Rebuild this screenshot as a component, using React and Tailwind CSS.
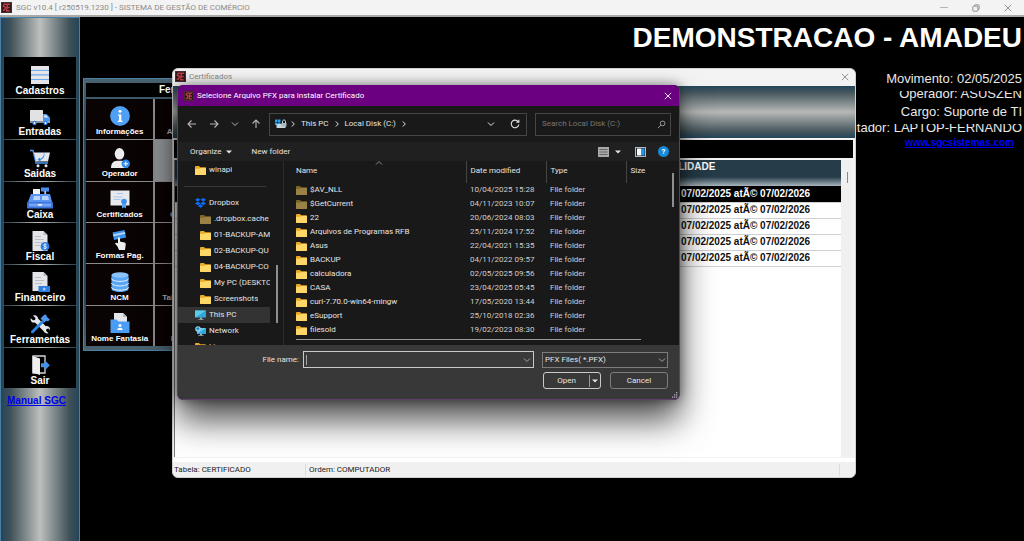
import React from "react";

const UI = "font-[Roboto,'Noto_Sans',sans-serif]";

/* ---------- icons ---------- */

function AppLogo({ className = "size-3" }) {
  return (
    <svg viewBox="0 0 12 12" className={className} aria-hidden="true">
      <rect width="12" height="12" fill="#4a3034" />
      <rect x="1" y="1" width="10" height="10" fill="#2a181b" />
      <path d="M6 2.500H3.500L2.500 4.500 5 6 3.500 9H2M10 2.500H7L6.200 9.500H9.500M6.700 6H9.500" stroke="#c23c46" strokeWidth="1.500" fill="none" />
    </svg>
  );
}

function Svg({ children }) {
  return (
    <svg viewBox="0 0 20 20" className="size-5 shrink-0" aria-hidden="true">
      {children}
    </svg>
  );
}

const icons = {
  cadastros: (
    <Svg>
      <rect x="1" y="1" width="18" height="18" fill="#9cc4f2" />
      <rect x="1" y="1" width="18" height="4" rx="0.6" fill="#e6e6ea" />
      <rect x="1" y="5.8" width="18" height="3.6" fill="#e6e6ea" />
      <rect x="1" y="10.4" width="18" height="3.6" fill="#e6e6ea" />
      <rect x="1" y="15" width="18" height="4" fill="#e6e6ea" />
      <path d="M1 5.4h18M1 9.9h18M1 14.5h18" stroke="#5d9fe8" strokeWidth="0.8" />
    </Svg>
  ),
  entradas: (
    <Svg>
      <rect x="0" y="4" width="13" height="11.5" rx="0.6" fill="#e2e2e6" />
      <path d="M13 8h3.5L20 11.5v5h-7z" fill="#4a98f0" />
      <path d="M14.2 9.2h2l2.2 2.4h-4.2z" fill="#d9ebff" />
      <path d="M0 15.5h20v1.3H0z" fill="#a9b7c9" />
      <circle cx="4.5" cy="17" r="2.2" fill="#2f7fdc" />
      <circle cx="4.5" cy="17" r="0.9" fill="#fff" />
      <circle cx="15.5" cy="17" r="2.2" fill="#2f7fdc" />
      <circle cx="15.5" cy="17" r="0.9" fill="#fff" />
    </Svg>
  ),
  saidas: (
    <Svg>
      <path d="M0 2.5h3L6 15h12" stroke="#4a98f0" strokeWidth="1.3" fill="none" />
      <path d="M3.8 4.5H20L18 13.5H6z" fill="#e4e8ee" />
      <path d="M12 2.500c3 2.500 2.500 6.500-2 8.500l-.300-1.600-2.200 2.600 3.300 1.200-.4-1.300C15.500 10 15.500 4.500 12 2.500z" fill="#2f7fdc" />
      <circle cx="8" cy="17.8" r="1.5" fill="#e4e8ee" />
      <circle cx="16" cy="17.8" r="1.5" fill="#e4e8ee" />
    </Svg>
  ),
  caixa: (
    <svg viewBox="0 0 26 22" className="h-[22px] w-[26px] shrink-0" aria-hidden="true">
      <rect x="14" y="0.5" width="8" height="4" fill="#4a8cf0" />
      <rect x="17.3" y="4" width="1.8" height="4" fill="#a8c8f8" />
      <path d="M6 2h7v7H6z" fill="#f0f2f6" />
      <path d="M4 7h19l2 8H1z" fill="#5b95f2" />
      <path d="M7 9h6v4H6zM15 9h6l1 4h-7z" fill="#b9d3fb" />
      <rect x="0" y="15" width="26" height="6.5" rx="0.8" fill="#3c74dc" />
      <rect x="2" y="16.5" width="22" height="3" fill="#74a5f5" />
      <rect x="11" y="17.2" width="4" height="1.4" fill="#fff" />
    </svg>
  ),
  fiscal: (
    <Svg>
      <path d="M2.5 0h11l4 4v16h-15z" fill="#e4e5e8" />
      <path d="M13.5 0v4h4z" fill="#b3bac4" />
      <path d="M5 5.5h6M5 8.500h9M5 11.500h7M5 14.500h5" stroke="#b9bec7" strokeWidth="1" />
      <circle cx="15" cy="15.400" r="4.400" fill="#2c7fe0" />
      <path d="M16.600 13.800c-1-1-3.200-.6-3 .6.2 1.400 3 .7 3 2.100-.1 1.200-2.200 1.400-3.300.4M15 12.500v5.800" stroke="#fff" strokeWidth="0.800" fill="none" />
    </Svg>
  ),
  financeiro: (
    <Svg>
      <path d="M2.500 0h11l4 4v15h-15z" fill="#e4e5e8" />
      <path d="M13.500 0v4h4z" fill="#b3bac4" />
      <path d="M5 5.500h6M5 8.500h9M5 11.500h7" stroke="#b9bec7" strokeWidth="1" />
      <rect x="8.500" y="14" width="11.500" height="6" fill="#2c7fe0" />
      <circle cx="14.200" cy="17" r="1.500" fill="#9cc8ff" />
    </Svg>
  ),
  ferramentas: (
    <Svg>
      <path d="M3 1.500 5.500 4 5 6 3 6.300.700 4.200C0 6.500 2 9.300 5 8.600L13.500 17c1 2 3 2.800 5 2.200L16 16.800l.500-1.800 2-.5 1.500 1.500c.4-2.400-1.600-4.300-4.200-3.800L8 4.500C8 2 5.500.500 3 1.500z" fill="#e6e8ec" />
      <path d="M1.200 17 12 6.200l2 2L3.300 19c-1.600.9-3-.5-2.100-2z" fill="#2f84e6" />
      <path d="M10.500 4.500 14 1l2-.5 1 2.500 2.800 2.600-1.800 2-1.700-.8-2 1.800z" fill="#4a98f0" />
    </Svg>
  ),
  sair: (
    <Svg>
      <path d="M3 1h12v17H3z" fill="none" stroke="#d4d6da" strokeWidth="1.300" />
      <path d="M2.500 1 10 3.500V20l-7.500-2.500z" fill="#eceef0" />
      <path d="M11 8.300h4V5.300l4.800 5-4.800 5v-3h-4z" fill="#3f92ee" />
    </Svg>
  ),
  info: (
    <Svg>
      <circle cx="10" cy="10" r="9.900" fill="#4f9ff5" />
      <circle cx="10" cy="5.300" r="1.500" fill="#fff" />
      <path d="M8 8.500h3.300v6.300h1.200V16H7.700v-1.200H9V9.800H8z" fill="#fff" />
    </Svg>
  ),
  operador: (
    <Svg>
      <ellipse cx="9.500" cy="5.800" rx="4.800" ry="5.800" fill="#ececee" />
      <path d="M1 20c0-5 2.500-7 6-7.300h5c3.500.3 5.500 2 5.500 7.300z" fill="#ececee" />
      <circle cx="15.800" cy="15.800" r="4.200" fill="#2f86ea" />
      <path d="M15.800 13.500v4.600M13.500 15.800h4.600" stroke="#fff" strokeWidth="1" />
    </Svg>
  ),
  certificados: (
    <Svg>
      <rect x="0.500" y="1.500" width="19" height="15" fill="#e8e9ec" />
      <path d="M7 4.500h6M3.500 8h9M3.500 10.500h7" stroke="#a9c7ea" strokeWidth="1" />
      <path d="M12 13v6.500l2-1.300 2 1.300V13z" fill="#5aa5f4" />
      <circle cx="14" cy="12.500" r="2.800" fill="#3d90ec" />
    </Svg>
  ),
  formas: (
    <Svg>
      <path d="M2.500 2.500 14.500 0l1.600 7.500L4 10z" fill="#3f92ee" />
      <path d="m3 4.600 12-2.500.4 1.700-12 2.500z" fill="#b6d8fb" />
      <path d="M8 7.500c1-.8 2 0 2 1v3l4.500 1c1 .3 1.300 1 1.200 2L15 20H9l-1.500-3.500L5 13.500c.5-1 1.500-1 3-.2z" fill="#eeeff1" />
    </Svg>
  ),
  ncm: (
    <Svg>
      <path d="M1.500 3v14c0 1.600 4 3 8.500 3s8.500-1.400 8.500-3V3z" fill="#5aa5f4" />
      <ellipse cx="10" cy="3" rx="8.500" ry="2.800" fill="#8cc3fb" />
      <path d="M1.500 6.500c0 1.600 4 2.900 8.500 2.900s8.500-1.300 8.500-2.900M1.500 11c0 1.600 4 2.900 8.500 2.900s8.500-1.300 8.500-2.900M1.500 15.300c0 1.600 4 2.900 8.500 2.900s8.500-1.300 8.500-2.900" stroke="#e9f3fe" strokeWidth="1" fill="none" />
    </Svg>
  ),
  fantasia: (
    <Svg>
      <path d="M4 0h9l4 4v8H4z" fill="#e4e6e9" />
      <path d="M13 0v4h4z" fill="#b3bac4" />
      <path d="M0.500 6.500h6l2 2H19.500V20h-19z" fill="#4a9df4" />
      <circle cx="10" cy="12.500" r="1.500" fill="#fff" />
      <path d="M7.300 17c0-3 5.400-3 5.400 0z" fill="#fff" />
    </Svg>
  ),
};

function Folder({ dim }) {
  return (
    <svg viewBox="0 0 11 9" className="h-[9px] w-[11px] shrink-0" aria-hidden="true">
      <path d="M0 1C0 .4.400 0 1 0h3l1.200 1.200H10c.6 0 1 .4 1 1V8c0 .6-.4 1-1 1H1c-.6 0-1-.4-1-1z" fill={dim ? "#7d6427" : "#e9a924"} />
      <path d="M0 2.800h4.300l1-.9H11V8c0 .6-.4 1-1 1H1c-.6 0-1-.4-1-1z" fill={dim ? "#9a8146" : "#ffd768"} />
    </svg>
  );
}

function DropboxIcon() {
  return (
    <svg viewBox="0 0 11 10" className="h-[10px] w-[11px] shrink-0" aria-hidden="true">
      <path d="M2.800 0 5.500 1.800 2.800 3.600 0 1.800zM8.200 0 11 1.800 8.200 3.600 5.500 1.800zM2.800 3.600 5.500 5.400 2.800 7.200 0 5.400zM8.200 3.600 11 5.400 8.200 7.200 5.500 5.400zM5.500 6.200 8.200 8 5.500 9.800 2.800 8z" fill="#0a6cff" />
    </svg>
  );
}

function Monitor({ globe }) {
  return (
    <svg viewBox="0 0 11 10" className="h-[10px] w-[11px] shrink-0" aria-hidden="true">
      <rect x={globe ? 2 : 0} y={globe ? 2 : 0.5} width={globe ? 9 : 11} height={globe ? 6 : 7} rx="0.500" fill="#2fa8d8" />
      <path d={globe ? "M2 8V2h9z" : "M0 7.500v-7h11z"} fill="#59cdea" />
      <path d="M5 7.500h2v1.500h1.500v.8h-5V9H5z" fill="#9fb4c0" />
      {globe && <circle cx="3" cy="3" r="2.800" fill="#8fd0f0" />}
      {globe && <path d="M1 2.500 3 1l1.500 1.500L3 4.500z" fill="#2580b8" />}
    </svg>
  );
}

function Chevron({ dir = "down", className = "size-2" }) {
  const d = { down: "M1 2.500 4 5.500 7 2.500", right: "M2.800 1.500 5.300 4 2.800 6.500", up: "M1 5.500 4 2.500 7 5.500" }[dir];
  return (
    <svg viewBox="0 0 8 8" className={className} fill="none" stroke="currentColor" strokeWidth="1" aria-hidden="true">
      <path d={d} />
    </svg>
  );
}

function Arrow({ d }) {
  return (
    <svg viewBox="0 0 10 10" className="size-[10px]" fill="none" stroke="currentColor" strokeWidth="1.100" aria-hidden="true">
      <path d={d} />
    </svg>
  );
}

function Caret() {
  return (
    <svg viewBox="0 0 6 4" className="h-1 w-1.5" fill="currentColor" aria-hidden="true">
      <path d="M0 .500h6L3 3.500z" />
    </svg>
  );
}

function Cross({ className = "size-2" }) {
  return (
    <svg viewBox="0 0 8 8" className={className} fill="none" stroke="currentColor" strokeWidth="0.900" aria-hidden="true">
      <path d="m.800.800 6.400 6.400M7.200.800.800 7.200" />
    </svg>
  );
}

/* ---------- main application ---------- */

const menu = [
  ["cadastros", "Cadastros"],
  ["entradas", "Entradas"],
  ["saidas", "Saidas"],
  ["caixa", "Caixa"],
  ["fiscal", "Fiscal"],
  ["financeiro", "Financeiro"],
  ["ferramentas", "Ferramentas"],
  ["sair", "Sair"],
];

const tools = [
  ["info", "Informações", "Atualização"],
  ["operador", "Operador", null],
  ["certificados", "Certificados", "Contratos"],
  ["formas", "Formas Pag.", ""],
  ["ncm", "NCM", "Tabela Preços"],
  ["fantasia", "Nome Fantasia", "Parceiros"],
];

function TitleBar() {
  return (
    <header className={`flex h-[17px] items-center border-b-2 border-[#a9a9a9] bg-[#f3f3f3] text-[#8a8a8a] ${UI}`}>
      <AppLogo className="ml-px size-[11px]" />
      <h1 className="ml-1 flex-1 text-[8px] leading-4">SGC v10.4 [ r250519.1230 ] - SISTEMA DE GESTÃO DE COMÉRCIO</h1>
      <div className="mr-3 flex items-center gap-6">
        <button type="button" aria-label="Minimizar" className="flex h-2 w-2 items-center">
          <span className="h-px w-full bg-[#b5b5b5]" />
        </button>
        <button type="button" aria-label="Restaurar">
          <svg viewBox="0 0 8 8" className="size-2" fill="none" stroke="#888" strokeWidth="0.900">
            <rect x="0.800" y="2.200" width="5" height="5" rx="0.800" />
            <path d="M2.500 2V1.300C2.500 1 2.800.8 3 .8h3.200c.6 0 1 .4 1 1V5c0 .3-.2.5-.5.5H6" />
          </svg>
        </button>
        <button type="button" aria-label="Fechar">
          <Cross />
        </button>
      </div>
    </header>
  );
}

function Sidebar() {
  return (
    <aside className="w-20 shrink-0 border-x border-t border-[#4d7fa3] bg-[linear-gradient(90deg,#24455a,#3f5158_12%,#bcbfbd_50%,#3f5158_88%,#24455a)] px-[3px] pt-[39px]">
      <nav className="grid h-[331px] auto-rows-fr gap-px">
        {menu.map(([icon, label]) => (
          <button key={label} type="button" className="flex flex-col items-center justify-end bg-black pb-px text-[10px] leading-3 font-bold text-white">
            {icons[icon]}
            <span>{label}</span>
          </button>
        ))}
      </nav>
      <a href="#manual" className="mt-[7px] ml-[3px] block text-[10px] leading-3 font-bold text-[#0000f0] underline">
        Manual SGC
      </a>
    </aside>
  );
}

function ToolsPanel() {
  return (
    <section className="mt-[61px] ml-[3px] w-[212px] shrink-0 self-start border border-[#4d7fa3] bg-[linear-gradient(180deg,#4a6370,#24455a_20%,#24455a_80%,#4a6370)] px-[2px] pt-1 pb-1">
      <h2 className="h-[14px] bg-black text-center text-[10px] leading-[14px] font-bold text-white">Ferramentas</h2>
      <div className="mt-[2px] grid h-[247px] auto-rows-fr grid-cols-3 gap-x-[2px] gap-y-px bg-[#8b8b8b]">
        {tools.map(([icon, label, second]) => (
          <React.Fragment key={label}>
            <button type="button" className="flex flex-col items-center justify-end bg-[#0a0303] pb-[2px] text-[8px] leading-[10px] font-bold text-white">
              {icons[icon]}
              <span className="mt-px whitespace-nowrap">{label}</span>
            </button>
            {second === null ? (
              <span className="bg-[#8f9395]" />
            ) : (
              <span className="flex flex-col items-center justify-end bg-[#0a0303] pb-[2px] text-[8px] leading-[10px] font-bold whitespace-nowrap text-[#b0b0b0]">{second}</span>
            )}
            <span className="bg-[#0a0303]" />
          </React.Fragment>
        ))}
      </div>
    </section>
  );
}

function Summary() {
  return (
    <section className="ml-auto flex flex-col items-end pr-[2px] text-[13px] whitespace-nowrap text-[#e8e8e8]">
      <h2 className="mt-[5px] text-[28px] leading-8 font-bold text-white">DEMONSTRACAO - AMADEU</h2>
      <p className="mt-[17px] h-[17px] leading-4">Movimento: 02/05/2025</p>
      <p className="mt-[3px] h-3 overflow-hidden leading-[6px]">Operador: ASUSZEN</p>
      <p className="mt-1 h-4 overflow-hidden leading-[9px]">Cargo: Suporte de TI</p>
      <p className="mt-px h-[13px] overflow-hidden leading-2">Computador: LAPTOP-FERNANDO</p>
      <a href="#sgc" className="mr-2 text-[10px] leading-3 font-bold text-[#0000ff] underline">
        www.sgcsistemas.com
      </a>
    </section>
  );
}

/* ---------- certificates window ---------- */

function CertificatesWindow() {
  return (
    <section className="absolute top-[68px] left-[172px] flex h-[410px] w-[684px] flex-col overflow-hidden rounded-md border border-[#d0d0d0] bg-[#f3f3f3]">
      <header className={`flex h-[17px] shrink-0 items-center pb-[2px] text-[#8a8a8a] ${UI}`}>
        <AppLogo className="ml-[2px] size-[11px]" />
        <h2 className="ml-[3px] flex-1 text-[8px] leading-3">Certificados</h2>
        <button type="button" aria-label="Fechar janela" className="mr-[6px]">
          <Cross />
        </button>
      </header>
      <div className="h-[52px] shrink-0 bg-[linear-gradient(180deg,#24455a,#44565c_12%,#b6b8b6_50%,#44565c_88%,#24455a)]" />
      <div className="mt-[2px] mr-[2px] ml-px h-[18px] shrink-0 bg-black" />
      <div className="mt-[2px] mr-[2px] ml-px flex flex-1 border-l border-[#777] bg-white">
        <table className="flex-1 self-start border-collapse text-[10px] leading-3 font-bold">
          <thead>
            <tr className="h-[26px] bg-[linear-gradient(180deg,#263c49_65%,#a9b4be)] align-top text-white">
              <th className="w-[506px]" aria-label="Certificado" />
              <th className="p-0 pt-px text-left">
                <span className="-ml-[16px]">VALIDADE</span>
              </th>
            </tr>
          </thead>
          <tbody>
            {[0, 1, 2, 3, 4].map((n) => (
              <tr key={n} className="h-4 border-b border-[#d0d0d0] text-[#111] first:bg-black first:text-white">
                <td />
                <td className="p-0">07/02/2025 atÃ© 07/02/2026</td>
              </tr>
            ))}
          </tbody>
        </table>
        <div className="flex w-3 justify-center bg-[#f0f0f0] pt-3">
          <span className="h-[11px] w-px bg-[#8a8a8a]" />
        </div>
      </div>
      <footer className={`mt-px flex h-[19px] shrink-0 items-center border-t-4 border-white bg-[#f0f0f0] text-[8px] leading-3 text-[#222] ${UI}`}>
        <span className="w-[133px] border-r border-[#dcdcdc] pl-px">Tabela: CERTIFICADO</span>
        <span className="flex-1 pl-[3px]">Ordem: COMPUTADOR</span>
        <span className="h-3 w-4 border-l border-[#dcdcdc]" />
      </footer>
    </section>
  );
}

/* ---------- file dialog ---------- */

const files = [
  ["$AV_NLL", "10/04/2025 15:28", true],
  ["$GetCurrent", "04/11/2023 10:07", true],
  ["22", "20/06/2024 08:03"],
  ["Arquivos de Programas RFB", "25/11/2024 17:52"],
  ["Asus", "22/04/2021 15:35"],
  ["BACKUP", "04/11/2022 09:57"],
  ["calculadora", "02/05/2025 09:56"],
  ["CASA", "23/04/2025 05:45"],
  ["curl-7.70.0-win64-mingw", "17/05/2020 13:44"],
  ["eSupport", "25/10/2018 02:36"],
  ["filesold", "19/02/2023 08:30"],
];

const tree = [
  [".dropbox.cache", true],
  ["01-BACKUP-AM"],
  ["02-BACKUP-QU"],
  ["04-BACKUP-CO"],
  ["My PC (DESKTO"],
  ["Screenshots"],
];

function TreeRow({ icon, label, nested, selected }) {
  return (
    <li className={`flex h-4 items-center gap-[3px] overflow-hidden whitespace-nowrap ${nested ? "pl-[22px]" : "pl-[17px]"} ${selected ? "bg-[#333]" : ""}`}>
      {icon}
      <span className="overflow-hidden">{label}</span>
    </li>
  );
}

function FileDialog() {
  return (
    <section
      role="dialog"
      aria-label="Selecione Arquivo PFX para instalar Certificado"
      className={`absolute top-[85px] left-[177px] flex h-[315px] w-[503px] flex-col overflow-hidden rounded-md border border-t-0 border-[#5d3f68] bg-[#191919] text-[8px] leading-3 text-[#e4e4e4] shadow-[0_20px_34px_rgba(0,0,0,0.7),0_0_12px_rgba(0,0,0,0.45)] ${UI}`}
    >
      <header className="flex h-[21px] shrink-0 items-center bg-[#6b0081] text-white">
        <AppLogo className="ml-[6px] size-[10px]" />
        <h2 className="ml-[3px] flex-1">Selecione Arquivo PFX para instalar Certificado</h2>
        <button type="button" aria-label="Fechar diálogo" className="mr-[7px]">
          <Cross />
        </button>
      </header>

      <div className="flex h-9 shrink-0 items-center pr-2 pl-[9px]">
        <div className="flex items-center gap-3 text-[#b5b5b5]">
          <button type="button" aria-label="Back"><Arrow d="M9 5H1M4.500 1.500 1 5l3.500 3.500" /></button>
          <button type="button" aria-label="Forward"><Arrow d="M1 5h8M5.500 1.500 9 5 5.500 8.500" /></button>
          <button type="button" aria-label="Recent"><Chevron /></button>
          <button type="button" aria-label="Up"><Arrow d="M5 9V1M1.500 4.500 5 1l3.500 3.500" /></button>
        </div>
        <div className="ml-2 flex h-[23px] flex-1 items-center border border-[#434843] pr-[6px] pl-[5px]">
          <svg viewBox="0 0 12 10" className="h-[10px] w-3" aria-hidden="true">
            <path d="M0 .500h2.500V3H0zM3 .500h2.500V3H3zM0 3.500h2.500V6H0zM3 3.500h2.500V6H3z" fill="#2fa4ec" />
            <rect x="1.500" y="5" width="9" height="4" rx="0.500" fill="#c9d3da" />
            <path d="M7.500 4.500V2.500c0-2 3-2 3 0v2z" fill="none" stroke="#d5dde2" strokeWidth="1" />
            <rect x="6.500" y="4" width="5" height="3.500" fill="#a9bac5" />
          </svg>
          <span className="ml-[2px]"><Chevron dir="right" /></span>
          <button type="button" className="ml-1">This PC</button>
          <span className="ml-1"><Chevron dir="right" /></span>
          <button type="button" className="ml-1">Local Disk (C:)</button>
          <span className="ml-1 flex-1"><Chevron dir="right" /></span>
          <button type="button" aria-label="History" className="mr-[15px]"><Chevron /></button>
          <button type="button" aria-label="Refresh">
            <svg viewBox="0 0 10 10" className="size-[10px]" fill="none" stroke="currentColor" strokeWidth="1.100">
              <path d="M8.300 3A3.800 3.800 0 1 0 8.800 5.500M8.800.800V3.200H6.400" />
            </svg>
          </button>
        </div>
        <label className="ml-2 flex h-[23px] w-[136px] items-center border border-[#434843] pr-1 pl-[6px]">
          <input type="text" aria-label="Search" placeholder="Search Local Disk (C:)" className="min-w-0 flex-1 bg-transparent outline-none placeholder:text-[#777]" />
          <svg viewBox="0 0 10 10" className="size-[9px]" fill="none" stroke="#a5a5a5" strokeWidth="1" aria-hidden="true">
            <circle cx="6.200" cy="3.800" r="2.600" />
            <path d="M4.300 5.700 1 9" />
          </svg>
        </label>
      </div>

      <div className="flex h-[19px] shrink-0 items-center bg-[#202020] pr-[10px] pl-3">
        <button type="button" className="flex items-center gap-1">
          Organize <Caret />
        </button>
        <button type="button" className="ml-5">New folder</button>
        <button type="button" aria-label="View" className="ml-auto flex items-center gap-[6px]">
          <svg viewBox="0 0 11 10" className="h-[10px] w-[11px]">
            <rect width="11" height="10" fill="#a9a9a9" />
            <path d="M1.500 2.500h8M1.500 5h8M1.500 7.500h8" stroke="#555" strokeWidth="0.800" />
          </svg>
          <Caret />
        </button>
        <button type="button" aria-label="Preview pane" className="ml-[14px]">
          <svg viewBox="0 0 11 10" className="h-[10px] w-[11px]">
            <rect width="11" height="10" fill="#b5b5b5" />
            <rect x="1" y="1" width="9" height="8" fill="#1a2a35" />
            <rect x="2" y="1.500" width="4" height="7" fill="#fff" />
            <rect x="6" y="1.500" width="3.500" height="7" fill="#1e9be8" />
          </svg>
        </button>
        <button type="button" aria-label="Help" className="ml-3 flex size-[11px] items-center justify-center rounded-full bg-[#1588d8] text-[8px] font-bold text-white">
          ?
        </button>
      </div>

      <div className="flex min-h-0 flex-1">
        <ul className="w-[92px] shrink-0 overflow-hidden pt-px">
          <TreeRow icon={<Folder />} label="winapi" />
          <li className="flex h-[17px] items-center pl-[6px]"><span className="h-px w-[82px] bg-[#383838]" /></li>
          <TreeRow icon={<DropboxIcon />} label="Dropbox" />
          {tree.map(([label, dim]) => (
            <TreeRow key={label} nested icon={<Folder dim={dim} />} label={label} />
          ))}
          <TreeRow selected icon={<Monitor />} label="This PC" />
          <TreeRow icon={<Monitor globe />} label="Network" />
          <TreeRow icon={<Folder />} label="Linux" />
        </ul>
        <div className="flex w-[14px] shrink-0 justify-center border-r border-[#2c2c2c] pt-[104px]">
          <span className="h-[58px] w-0.5 bg-[#8f8f8f]" />
        </div>
        <div className="relative min-w-0 flex-1 pl-3">
          <span className="absolute top-[-2px] left-[91px] text-[#8a8a8a]"><Chevron dir="up" /></span>
          <table className="w-full table-fixed border-collapse text-left">
            <thead>
              <tr className="h-[22px]">
                <th className="w-[170px] p-0 pb-[3px] font-normal">Name</th>
                <th className="w-20 border-l border-[#444] p-0 pb-[3px] pl-1 font-normal">Date modified</th>
                <th className="w-20 border-l border-[#444] p-0 pb-[3px] pl-1 font-normal">Type</th>
                <th className="border-l border-[#444] p-0 pb-[3px] pl-1 font-normal">Size</th>
              </tr>
            </thead>
            <tbody>
              {files.map(([name, date, dim]) => (
                <tr key={name} className="h-[14px] whitespace-nowrap">
                  <td className="p-0">
                    <span className="flex items-center gap-[3px]"><Folder dim={dim} />{name}</span>
                  </td>
                  <td className="p-0 pl-1 text-[#cfcfcf]">{date}</td>
                  <td className="p-0 pl-1 text-[#cfcfcf]">File folder</td>
                  <td />
                </tr>
              ))}
            </tbody>
          </table>
          <span className="absolute top-3 right-[5px] h-[34px] w-0.5 bg-[#8f8f8f]" />
          <span className="absolute right-[38px] bottom-[5px] left-3 h-px bg-[#9a9a9a]" />
        </div>
      </div>

      <footer className="relative h-[54px] shrink-0 bg-[#383838] pt-[6px] pr-[11px]">
        <div className="flex items-center justify-end">
          <label htmlFor="file-name" className="mr-1">File name:</label>
          <div className="flex h-[17px] w-[231px] items-center border border-[#c9c9c9] bg-[#3a3a3a] px-[2px] text-[#a5a5a5]">
            <span className="h-[10px] w-px bg-[#a5a5a5]" />
            <input id="file-name" type="text" className="min-w-0 flex-1 bg-transparent text-[#e4e4e4] outline-none" />
            <Chevron />
          </div>
          <div className="relative ml-2 flex w-[126px] items-center">
            <select aria-label="File type" className="h-4 w-full appearance-none border border-[#7c7c7c] bg-[#333] pl-[2px] outline-none">
              <option>PFX Files( *.PFX)</option>
            </select>
            <span className="pointer-events-none absolute right-[2px] text-[#a5a5a5]"><Chevron /></span>
          </div>
        </div>
        <div className="mt-1 flex justify-end gap-[9px]">
          <div className="flex h-[17px] w-[58px] items-center rounded-[3px] border border-[#c9c9c9]">
            <button type="button" className="flex-1">Open</button>
            <button type="button" aria-label="Open options" className="flex h-3 items-center border-l border-[#9a9a9a] px-[2px]"><Caret /></button>
          </div>
          <button type="button" className="h-[17px] w-[58px] rounded-[3px] border border-[#7c7c7c]">Cancel</button>
        </div>
        <svg viewBox="0 0 6 6" className="absolute right-px bottom-px size-1.5" fill="#b9a9c0" aria-hidden="true">
          <path d="M4 0h1.300v1.300H4zM4 2.200h1.300v1.300H4zM4 4.400h1.300v1.300H4zM2 2.200h1.300v1.300H2zM2 4.400h1.300v1.300H2zM0 4.400h1.300v1.300H0z" />
        </svg>
      </footer>
    </section>
  );
}

export default function App() {
  return (
    <div className="relative flex min-h-screen flex-col overflow-hidden bg-black font-['Liberation_Sans',Arial,sans-serif]">
      <TitleBar />
      <main className="flex flex-1">
        <Sidebar />
        <ToolsPanel />
        <Summary />
      </main>
      <CertificatesWindow />
      <FileDialog />
    </div>
  );
}
